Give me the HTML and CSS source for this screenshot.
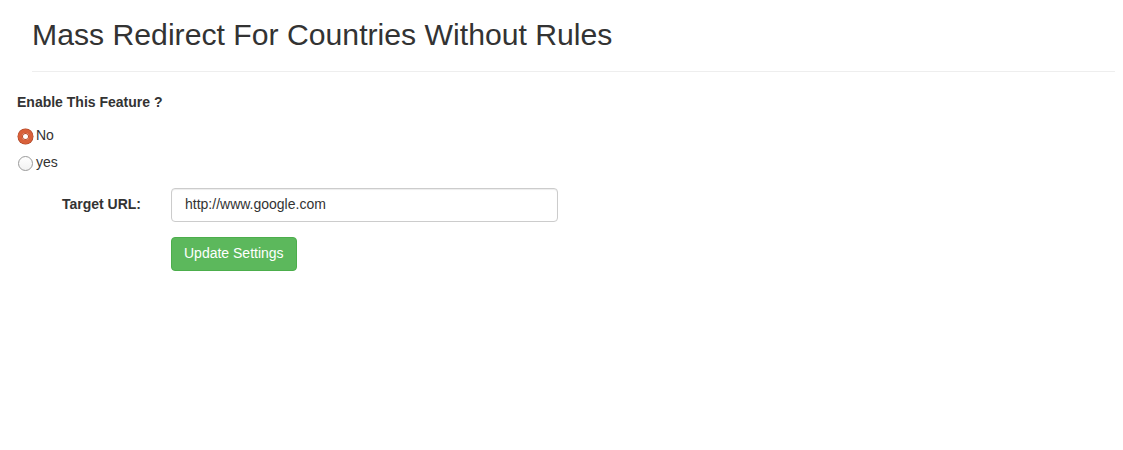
FILE: index.html
```html
<!DOCTYPE html>
<html>
<head>
<meta charset="utf-8">
<link rel="stylesheet" href="styles.css">
</head>
<body>
<div class="page">
  <div class="page-header">
    <h1>Mass Redirect For Countries Without Rules</h1>
  </div>
  <form class="form">
    <div class="group-label">Enable This Feature ?</div>
    <label class="radio"><span class="dot checked"></span><span>No</span></label>
    <label class="radio"><span class="dot"></span><span>yes</span></label>
    <div class="row">
      <div class="row-label">Target URL:</div>
      <div class="field"><div class="input">http://www.google.com</div></div>
    </div>
    <div class="row">
      <div class="row-label"></div>
      <div class="field"><button type="button" class="btn">Update Settings</button></div>
    </div>
  </form>
</div>
</body>
</html>
```
FILE: styles.css
```css
html, body { margin: 0; padding: 0; background: #fff; }
body {
  font-family: "Liberation Sans", Arial, sans-serif;
  font-size: 14px;
  color: #333;
  line-height: 1.42857;
}
.page { padding: 0 8px 0 17px; }
.page-header {
  margin: 0 0 0 15px;
  padding: 18px 0 20px;
  border-bottom: 1px solid #eee;
}
.page-header h1 {
  margin: 0;
  font-size: 30.2px;
  font-weight: 400;
  line-height: 1.1;
  color: #333;
}
.form { padding-top: 21px; }
.group-label { font-weight: 700; margin-bottom: 11px; }
.radio {
  display: flex;
  align-items: center;
  gap: 3px;
  height: 27px;
  margin-left: 1px;
}
.radio span:last-child { position: relative; top: -2px; }
.dot {
  width: 15px; height: 15px;
  box-sizing: border-box;
  border-radius: 50%;
  border: 1px solid #9a9a9a;
  background: linear-gradient(#fff, #f2f2f2);
  position: relative;
  top: -1px;
}
.dot.checked {
  border: 4px solid #d8603a;
  background: #fff;
  box-shadow: 0 0 0 1px #b84a28 inset, 0 0 0 0.5px #a84020;
}
.row { display: flex; align-items: center; margin-top: 10px; }
.row + .row { margin-top: 15px; }
.row-label {
  width: 124px;
  text-align: right;
  font-weight: 700;
  box-sizing: border-box;
}
.field { margin-left: 30px; }
.input {
  width: 387px;
  height: 34px;
  box-sizing: border-box;
  border: 1px solid #ccc;
  border-radius: 4px;
  padding: 6px 13px;
  box-shadow: inset 0 1px 1px rgba(0,0,0,.075);
  color: #333;
}
.btn {
  font-family: inherit;
  font-size: 14px;
  line-height: 1.42857;
  color: #fff;
  background: #5cb85c;
  border: 1px solid #4cae4c;
  border-radius: 4px;
  padding: 6px 12px;
  height: 34px;
}
```
